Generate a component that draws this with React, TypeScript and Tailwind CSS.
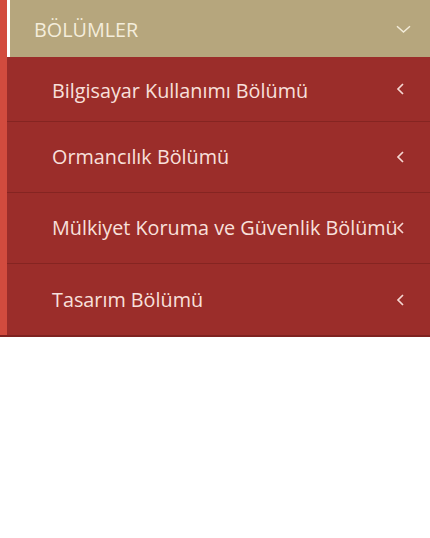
const ITEMS = [
  "Bilgisayar Kullanımı Bölümü",
  "Ormancılık Bölümü",
  "Mülkiyet Koruma ve Güvenlik Bölümü",
  "Tasarım Bölümü",
] as const;

function ChevronLeft() {
  return (
    <svg width="9" height="13" viewBox="0 0 9 13" fill="none" aria-hidden>
      <path d="M7 1.5 2 6.5 7 11.5" stroke="#f5d6d1" strokeWidth="1.7" />
    </svg>
  );
}

function ChevronDown() {
  return (
    <svg width="15" height="9" viewBox="0 0 15 9" fill="none" aria-hidden>
      <path d="M1 1.3 7.5 7 14 1.3" stroke="#f3ecda" strokeWidth="1.5" />
    </svg>
  );
}

export default function App() {
  return (
    <div className="h-[538px] w-[430px] bg-white font-['Open_Sans',sans-serif]">
      <nav className="flex border-b-2 border-[#7f2220] bg-[#d24b3e]">
        <div className="w-[7px] shrink-0" />
        <div className="flex min-w-0 flex-1 flex-col">
          <div className="flex h-[57px] items-center border-l-[3px] border-white bg-[#b6a67d] pt-[2px] pr-[19px] pl-[24px]">
            <span className="flex-1 text-[19.8px] leading-none text-[#f4eddb]">
              BÖLÜMLER
            </span>
            <ChevronDown />
          </div>
          {ITEMS.map((item, i) => (
            <div
              key={item}
              className={`relative flex items-center bg-[#9b2d2a] pl-[45px] ${
                i === 0
                  ? "h-[64px] pt-[3px]"
                  : i === 3
                    ? "h-[72px] border-t border-[#852421]"
                    : "h-[71px] border-t border-[#852421]"
              }`}
            >
              <span className="whitespace-nowrap text-[19.8px] leading-none text-[#f8e0dc]">
                {item}
              </span>
              <span className="absolute right-[25px] top-1/2 -translate-y-1/2">
                <ChevronLeft />
              </span>
            </div>
          ))}
        </div>
      </nav>
    </div>
  );
}
